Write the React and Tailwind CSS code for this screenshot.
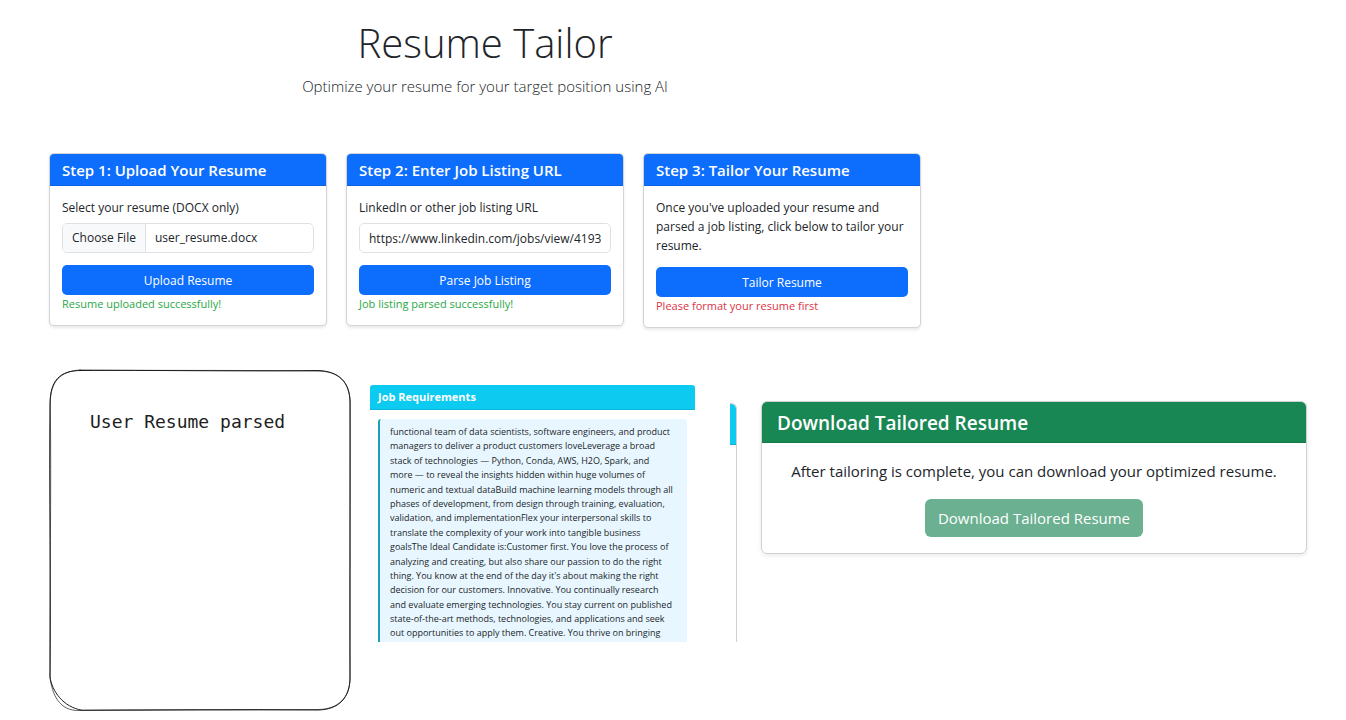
import { useEffect, useRef } from "react";

const REQUIREMENTS = [
  "functional team of data scientists, software engineers, and product",
  "managers to deliver a product customers loveLeverage a broad",
  "stack of technologies — Python, Conda, AWS, H2O, Spark, and",
  "more — to reveal the insights hidden within huge volumes of",
  "numeric and textual dataBuild machine learning models through all",
  "phases of development, from design through training, evaluation,",
  "validation, and implementationFlex your interpersonal skills to",
  "translate the complexity of your work into tangible business",
  "goalsThe Ideal Candidate is:Customer first. You love the process of",
  "analyzing and creating, but also share our passion to do the right",
  "thing. You know at the end of the day it's about making the right",
  "decision for our customers. Innovative. You continually research",
  "and evaluate emerging technologies. You stay current on published",
  "state-of-the-art methods, technologies, and applications and seek",
  "out opportunities to apply them. Creative. You thrive on bringing",
];

function StepCard({ title, children }) {
  return (
    <section className="overflow-hidden rounded-[5px] border border-[#d3d4d5] bg-white shadow-[0_2px_3px_rgba(0,0,0,0.09)]">
      <h2 className="border-b border-[#0b63e6] bg-[#0d6efd] px-3 pt-px text-[15px] leading-[30px] font-semibold text-white">
        {title}
      </h2>
      <div className="p-3">{children}</div>
    </section>
  );
}

function StepButton({ children }) {
  return (
    <button
      type="button"
      className="mt-3 block h-[30px] w-full rounded-[5px] bg-[#0d6efd] pt-px text-[12px] text-white"
    >
      {children}
    </button>
  );
}

function Status({ error, children }) {
  return (
    <p
      className={
        error
          ? "text-[11px] leading-[18px] text-[#dc3545]"
          : "text-[11px] leading-[18px] text-[#28a745]"
      }
    >
      {children}
    </p>
  );
}

function ResumeInput() {
  const ref = useRef(null);
  useEffect(() => {
    const transfer = new DataTransfer();
    transfer.items.add(new File(["resume"], "user_resume.docx"));
    ref.current.files = transfer.files;
  }, []);
  return (
    <input
      ref={ref}
      id="resume"
      type="file"
      accept=".docx"
      className="block h-[30px] w-full rounded-[5px] border border-[#dee2e6] text-[12px] leading-[28px] file:mr-[9px] file:h-[28px] file:border-r file:border-[#dee2e6] file:bg-[#f8f9fa] file:px-[9px] file:text-[#212529]"
    />
  );
}

export default function App() {
  return (
    <div className="bg-white pr-[39px] pb-[8px] pl-[49px] font-['Open_Sans','Noto_Sans',sans-serif] text-[#212529]">
      <div className="w-full max-w-[872px]">
        <header className="pt-[18px] text-center">
          <h1 className="text-[40px] leading-[50px] font-light">Resume Tailor</h1>
          <p className="mt-[6px] text-[15px] leading-[24px] font-light">
            Optimize your resume for your target position using AI
          </p>
        </header>

        <div className="mt-[55px] grid grid-cols-3 items-start gap-[19px]">
          <StepCard title="Step 1: Upload Your Resume">
            <label htmlFor="resume" className="mb-[6px] block text-[12px] leading-[19px]">
              Select your resume (DOCX only)
            </label>
            <ResumeInput />
            <StepButton>Upload Resume</StepButton>
            <Status>Resume uploaded successfully!</Status>
          </StepCard>

          <StepCard title="Step 2: Enter Job Listing URL">
            <label htmlFor="listing" className="mb-[6px] block text-[12px] leading-[19px]">
              LinkedIn or other job listing URL
            </label>
            <input
              id="listing"
              type="url"
              defaultValue="https://www.linkedin.com/jobs/view/41938"
              className="block h-[30px] w-full rounded-[5px] border border-[#dee2e6] px-[9px] text-[12px]"
            />
            <StepButton>Parse Job Listing</StepButton>
            <Status>Job listing parsed successfully!</Status>
          </StepCard>

          <StepCard title="Step 3: Tailor Your Resume">
            <p className="text-[12px] leading-[19px]">
              Once you've uploaded your resume and
              <br />
              parsed a job listing, click below to tailor your
              <br />
              resume.
            </p>
            <StepButton>Tailor Resume</StepButton>
            <Status error>Please format your resume first</Status>
          </StepCard>
        </div>
      </div>

      <div className="mt-[41px] flex items-start">
        <section className="relative h-[343px] w-[302px] shrink-0 pt-[41px] pl-[41px]">
          <svg
            className="absolute top-0 left-0 h-full w-full"
            viewBox="0 0 302 343"
            fill="none"
            stroke="#1e1e1e"
            strokeWidth="1"
            strokeLinecap="round"
            aria-hidden="true"
          >
            <path d="M32 1.500C100 1 190 2.500 268 1.500C290 2 301 13 301 34C301.500 120 300.500 220 301 308C301 329 290 340.500 269 341C190 340 110 341.500 33 341.200C14 338 3 322 1 308C2 220 0 120 1 34C1.500 12 10 1.500 32 1.500Z" />
            <path
              d="M31 1C110 1.800 180 1 267 2C289 1.500 300.500 12 301.200 33C300.500 130 301.500 210 301 309C301.500 328 289 341 268 340.500C180 341.500 120 340 31 341.500C10 342.500 3 325 1 308C0.500 210 2.500 130 1.300 35C1 13 11 2 31 1Z"
              strokeWidth="0.700"
            />
          </svg>
          <p className="relative font-['DejaVu_Sans_Mono',monospace] text-[18px] leading-[24px] text-[#1e1e1e]">
            User Resume parsed
          </p>
        </section>

        <section className="mt-[16px] ml-[19px] w-[325px] shrink-0">
          <h2 className="rounded-t-[3px] border-b border-[#0bb8db] bg-[#0dcaf0] px-2 text-[11px] leading-[24px] font-bold text-white">
            Job Requirements
          </h2>
          <div className="mx-2 mt-[9px] h-[223px] overflow-hidden rounded-t-[3px] border-l-2 border-[#17a2b8] bg-[#e8f7ff] pt-[6px] pl-[10px] text-[9px] leading-[1.6] whitespace-nowrap">
            {REQUIREMENTS.map((line) => (
              <p key={line}>{line}</p>
            ))}
          </div>
        </section>

        <div className="mt-[34px] ml-[35px] h-[239px] w-[7px] shrink-0 overflow-hidden rounded-tr-[6px] border-t border-r border-[#cfd0d1]">
          <div className="h-[41px] border-b border-[#0bb0d2] bg-[#0dcaf0]" />
        </div>

        <section className="mt-[32px] ml-[24px] min-w-0 flex-1 overflow-hidden rounded-[6px] border border-[#cfd0d1] shadow-[0_2px_4px_rgba(0,0,0,0.08)]">
          <h2 className="border-b border-[#177a4b] bg-[#198754] px-[15px] pt-[2px] text-[19px] leading-[38px] font-semibold text-white">
            Download Tailored Resume
          </h2>
          <div className="flex flex-col items-center gap-4 p-4 text-[15px]">
            <p className="leading-[24px]">
              After tailoring is complete, you can download your optimized resume.
            </p>
            <button
              type="button"
              disabled
              className="h-[38px] rounded-[6px] bg-[#6bb090] px-[13px] text-white"
            >
              Download Tailored Resume
            </button>
          </div>
        </section>
      </div>
    </div>
  );
}
